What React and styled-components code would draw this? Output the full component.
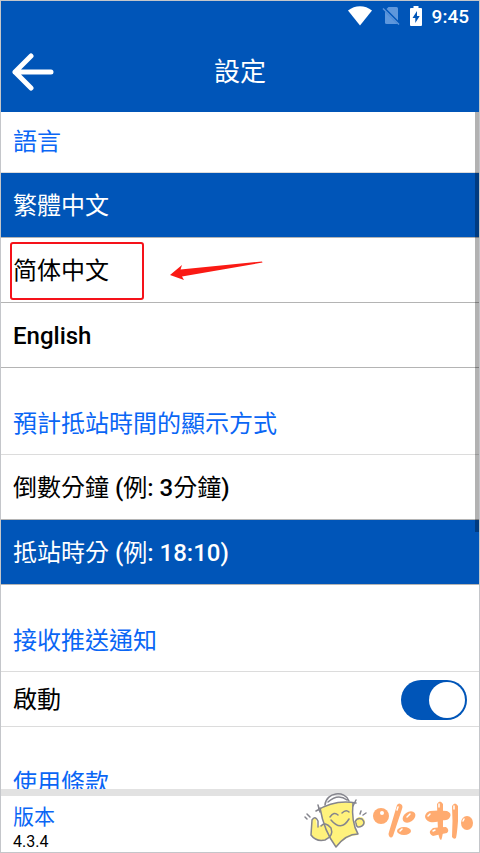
import React, { useState } from 'react';
import styled, { createGlobalStyle } from 'styled-components';

const GlobalStyle = createGlobalStyle`
  * {
    box-sizing: border-box;
  }

  body {
    margin: 0;
    font-family: Roboto, 'Noto Sans CJK TC', sans-serif;
    color: #000;
    background-color: #fff;
  }

  button {
    font-family: inherit;
    cursor: pointer;
  }
`;

const Screen = styled.div`
  position: relative;
  display: flex;
  flex-direction: column;
  height: 100vh;
  border: 1px solid #c4c6ca;
  background-color: #fff;
  overflow: hidden;
`;

const Header = styled.header`
  flex: none;
  color: #fff;
  background-color: #0055b8;
`;

const StatusBar = styled.div`
  display: flex;
  justify-content: flex-end;
  align-items: center;
  height: 30px;
  padding-right: 10px;
`;

const WifiIcon = styled.svg`
  width: 24px;
  height: 20px;
  margin-right: 10px;
`;

const SimIcon = styled.svg`
  width: 18px;
  height: 20px;
  margin-right: 10px;
`;

const BatteryIcon = styled.svg`
  width: 12px;
  height: 20px;
  margin-right: 10px;
`;

const Time = styled.span`
  font-size: 19px;
  font-weight: 500;
`;

const TitleBar = styled.div`
  display: grid;
  grid-template-columns: 64px 1fr 64px;
  align-items: center;
  height: 81px;
`;

const BackButton = styled.button`
  display: flex;
  align-items: center;
  height: 64px;
  padding: 0 0 0 11px;
  border: none;
  color: inherit;
  background: none;
`;

const Title = styled.h1`
  margin: 0;
  font-size: 26px;
  font-weight: 400;
  line-height: 30px;
  text-align: center;
`;

const Body = styled.main`
  position: relative;
  flex: 1;
  min-height: 0;
  overflow: hidden;
`;

const ScrollThumb = styled.div`
  position: absolute;
  top: 0;
  right: 0;
  width: 4px;
  height: 62%;
  background-color: rgba(0, 0, 0, 0.3);
`;

const Section = styled.section`
  & + & {
    margin-top: 26px;
  }
`;

const SectionTitle = styled.h2`
  display: flex;
  align-items: center;
  height: 61px;
  margin: 0;
  padding: 0 12px;
  border-bottom: 1px solid #dcdcdc;
  font-size: 24px;
  font-weight: 400;
  line-height: 30px;
  color: #0a66f5;
`;

const Option = styled.button`
  position: relative;
  display: flex;
  align-items: center;
  width: 100%;
  height: 65px;
  padding: 2px 12px 0;
  border: none;
  border-bottom: 1px solid #b4b4b4;
  font-size: 24px;
  line-height: 30px;
  text-align: left;
  color: ${({ $selected }) => ($selected ? '#fff' : '#000')};
  background-color: ${({ $selected }) => ($selected ? '#0055b8' : '#fff')};
`;

const Latin = styled.span`
  font-weight: 500;
`;

const HighlightBox = styled.span`
  position: absolute;
  top: 4px;
  left: 9px;
  width: 134px;
  height: 58px;
  border: 2px solid #f5121a;
  border-radius: 3px;
`;

const HighlightArrow = styled.svg`
  position: absolute;
  top: 22px;
  left: 168px;
  width: 94px;
  height: 22px;
`;

const SwitchRow = styled.label`
  display: flex;
  justify-content: space-between;
  align-items: center;
  height: 55px;
  padding: 2px 12px 0;
  border-bottom: 1px solid #dcdcdc;
  font-size: 24px;
  line-height: 30px;
  cursor: pointer;
`;

const Switch = styled.input`
  appearance: none;
  display: flex;
  align-items: center;
  width: 66px;
  height: 40px;
  margin: 0;
  padding: 2px;
  border-radius: 20px;
  background-color: #b4b4b4;
  cursor: pointer;

  &::before {
    content: '';
    width: 36px;
    height: 36px;
    border-radius: 50%;
    background-color: #fff;
  }

  &:checked {
    justify-content: flex-end;
    background-color: #0055b8;
  }
`;

const Footer = styled.footer`
  flex: none;
  padding: 6px 12px 0;
  border-top: 7px solid #e2e2e2;
`;

const FooterLabel = styled.div`
  font-size: 21px;
  line-height: 30px;
  color: #0a66f5;
`;

const Version = styled.div`
  font-size: 16px;
  line-height: 20px;
`;

const Watermark = styled.svg`
  position: absolute;
  right: 2px;
  bottom: 1px;
  width: 174px;
  height: 60px;
`;

const LANGUAGES = [
  { id: 'zh-Hant', label: '繁體中文' },
  { id: 'zh-Hans', label: '简体中文', highlighted: true },
  { id: 'en', label: <Latin>English</Latin> },
];

const TIME_FORMATS = [
  {
    id: 'countdown',
    label: (
      <>
        倒數分鐘 <Latin>(</Latin>例<Latin>: 3</Latin>分鐘<Latin>)</Latin>
      </>
    ),
  },
  {
    id: 'clock',
    label: (
      <>
        抵站時分 <Latin>(</Latin>例<Latin>: 18:10)</Latin>
      </>
    ),
  },
];

const StatusIcons = () => (
  <StatusBar>
    <WifiIcon viewBox="0 0 24 20" fill="#fff" aria-hidden="true">
      <path d="M0 4.6C7-1.2 17-1.2 24 4.6L12 19.5Z" />
    </WifiIcon>
    <SimIcon viewBox="0 0 18 20" aria-hidden="true">
      <path d="M6.5 1H14.5Q16 1 16 2.5V14.5L4.5 3Z" fill="#5e97dc" />
      <path d="M3 5.5L15.3 17.8Q15 18 14.5 18H4.5Q3 18 3 16.5Z" fill="#5e97dc" />
      <path d="M1 2.5L17 18.5" stroke="#5e97dc" strokeWidth="1.5" />
    </SimIcon>
    <BatteryIcon viewBox="0 0 12 20" aria-hidden="true">
      <path
        d="M3.5 0H8.5V2H11Q12 2 12 3V19Q12 20 11 20H1Q0 20 0 19V3Q0 2 1 2H3.5Z"
        fill="#fff"
      />
      <path d="M7 5L2.5 12H5.3V17L9.7 10H7Z" fill="#0055b8" />
    </BatteryIcon>
    <Time>9:45</Time>
  </StatusBar>
);

const Highlight = () => (
  <>
    <HighlightBox />
    <HighlightArrow viewBox="0 0 94 22" aria-hidden="true">
      <path d="M1 15L13 5L11.5 9.5L93 1.5L93.5 2.5L13 16.5L15 20Z" fill="#fa1a14" />
    </HighlightArrow>
  </>
);

const OptionList = ({ options, value, onChange }) =>
  options.map(({ id, label, highlighted }) => (
    <Option
      key={id}
      type="button"
      lang={id === 'zh-Hans' ? id : undefined}
      aria-pressed={value === id}
      $selected={value === id}
      onClick={() => onChange(id)}
    >
      <span>{label}</span>
      {highlighted && <Highlight />}
    </Option>
  ));

const Logo = () => (
  <Watermark viewBox="0 0 174 60" fill="none" aria-hidden="true">
    {/* mascot */}
    <path d="M17 17Q33 9 50 12Q48 31 55 44Q44 44 33 56Q22 42 17 17Z" fill="#fff27c" />
    <path d="M13 27Q9 27 9 32L8 44Q13 51 22 49Q31 45 28 37Q21 31 14 36Z" fill="#fff27c" />
    <circle cx="57" cy="31" r="5" fill="#fff27c" />
    <g stroke="#85858d" strokeWidth="1.5" strokeLinecap="round" strokeLinejoin="round">
      <path d="M13 20Q32 8 53 12M15 14L17 21M53 9L50 15" />
      <path d="M22 14C23 1 42-1 46 10M25 11Q35 2 44 9" />
      <path d="M17 17Q21 40 33 56Q43 43 55 43Q48 31 50 12" />
      <path d="M15 36V30Q12 24 9 29L8 44Q13 51 22 49Q31 45 28 37Q22 30 18 35" />
      <path d="M52 31Q54 26 59 28Q63 32 59 35Q53 38 53 32M57 23L58 20M60 24L63 22" />
      <path d="M27 26Q31 20 35 24M39 22Q43 18 46 21M28 29Q38 41 46 28" />
      <path d="M2 26L4 28M4 23L7 26" />
    </g>
    {/* orange balloon strokes */}
    <g fill="#ffab70">
      <circle cx="78" cy="25" r="8" />
      <path d="M94 14Q96 11 99 14Q100 16 99 18L90 45Q88 48 86 45Q85 43 86 41Z" />
      <ellipse cx="106" cy="26" rx="7" ry="5" transform="rotate(-35 106 26)" />
      <ellipse cx="101" cy="40" rx="7" ry="4" />
      <path d="M134 13Q137 8 140 13V41Q139 48 138 49Q136 48 135 41Z" />
      <path d="M127 20Q135 19 144 20Q149 22 147 26Q145 30 139 29Q133 32 127 31Q122 29 122 25Q123 21 127 20Z" />
      <path d="M130 37Q137 36 143 36Q147 39 144 42Q138 43 130 45Q126 43 127 40Z" />
      <path d="M149 15Q152 10 155 15V30Q154 43 153 47Q151 49 149 46Q150 30 149 15Z" />
      <ellipse cx="164" cy="32" rx="6" ry="7" />
    </g>
    <g stroke="#fff" strokeWidth="1.5" strokeLinecap="round">
      <path d="M95 16L94 19M104 26L107 23M97 40L99 38M136 13V16M125 25L127 23M130 40L132 39M151 15V18M160 30L161 28" />
    </g>
    <circle cx="79" cy="22" r="2" fill="#fff" />
  </Watermark>
);

const App = () => {
  const [language, setLanguage] = useState('zh-Hant');
  const [timeFormat, setTimeFormat] = useState('clock');
  const [pushEnabled, setPushEnabled] = useState(true);

  return (
    <>
      <GlobalStyle />
      <Screen lang="zh-Hant">
        <Header>
          <StatusIcons />
          <TitleBar>
            <BackButton type="button" aria-label="返回">
              <svg width="42" height="40" viewBox="0 0 42 40" aria-hidden="true">
                <path
                  d="M19 4L3 20L19 36M3 20H39"
                  fill="none"
                  stroke="#fff"
                  strokeWidth="5"
                  strokeLinecap="round"
                  strokeLinejoin="round"
                />
              </svg>
            </BackButton>
            <Title>設定</Title>
          </TitleBar>
        </Header>
        <Body>
          <Section>
            <SectionTitle>語言</SectionTitle>
            <OptionList options={LANGUAGES} value={language} onChange={setLanguage} />
          </Section>
          <Section>
            <SectionTitle>預計抵站時間的顯示方式</SectionTitle>
            <OptionList
              options={TIME_FORMATS}
              value={timeFormat}
              onChange={setTimeFormat}
            />
          </Section>
          <Section>
            <SectionTitle>接收推送通知</SectionTitle>
            <SwitchRow>
              啟動
              <Switch
                type="checkbox"
                checked={pushEnabled}
                onChange={(e) => setPushEnabled(e.target.checked)}
              />
            </SwitchRow>
          </Section>
          <Section>
            <SectionTitle>使用條款</SectionTitle>
          </Section>
          <ScrollThumb />
        </Body>
        <Footer>
          <FooterLabel>版本</FooterLabel>
          <Version>4.3.4</Version>
        </Footer>
        <Logo />
      </Screen>
    </>
  );
};

export default App;
